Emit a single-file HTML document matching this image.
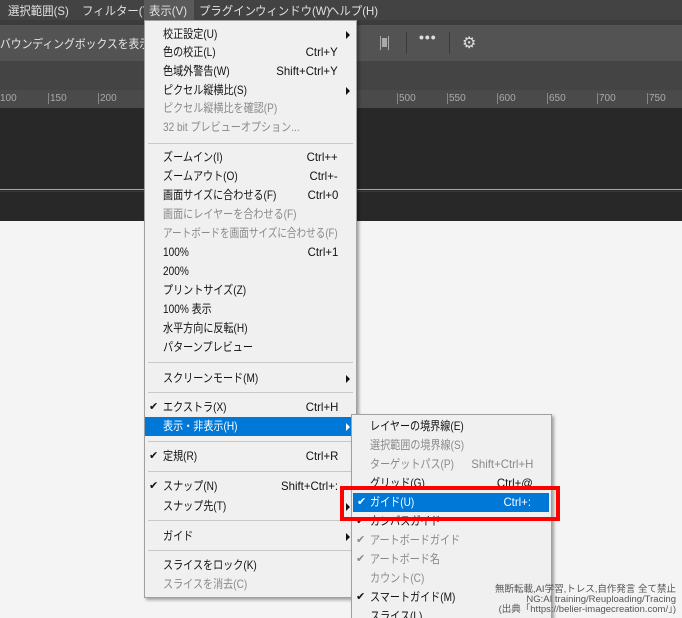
<!DOCTYPE html><html><head><meta charset="utf-8"><style>
*{margin:0;padding:0;box-sizing:border-box}
html{width:682px;height:618px;overflow:hidden}
body{width:682px;height:618px;overflow:hidden;position:relative;background:#f4f4f4;font-family:"Liberation Sans","Noto Sans CJK JP",sans-serif;font-size:12px}
.abs{position:absolute}
.mb{left:0;top:0;width:682px;height:20px;background:#434343;color:#e0e0e0}
.mb span{position:absolute;top:2px;white-space:nowrap;transform:scaleX(.95);transform-origin:left}
.menu{background:#f0f0f0;border:1px solid #a0a0a0;box-shadow:2px 2px 3px rgba(0,0,0,.35)}
.it{position:absolute;left:0;right:0;height:19px;line-height:19px;color:#111;white-space:nowrap}
.it .l{position:absolute;left:18px;transform:scaleX(.84);transform-origin:left}
.it .r{position:absolute;right:18px;transform:scaleX(.95);transform-origin:right}
.it .c{position:absolute;left:4px;font-size:11px}
.it .a{position:absolute;right:6px;top:6px;width:0;height:0;border-left:4px solid #111;border-top:4px solid transparent;border-bottom:4px solid transparent}
.d{color:#8a8a8a}.d .a{border-left-color:#8a8a8a}
.hl{background:#0078d7;color:#fff}.hl .a{border-left-color:#fff}
.sep{position:absolute;left:3px;right:3px;height:1px;background:#c8c8c8}
.wm{color:#555;font-size:9.5px;text-align:right;line-height:10px;right:6px;white-space:nowrap}
</style></head><body>
<div class="abs mb">
<span style="left:8px">選択範囲(S)</span><span style="left:82px">フィルター(T)</span>
<div class="abs" style="left:144px;top:0;width:50px;height:20px;background:#5a5a5a"></div>
<span style="left:149px">表示(V)</span><span style="left:199px">プラグイン</span><span style="left:255px">ウィンドウ(W)</span><span style="left:328px">ヘルプ(H)</span>
</div>
<div class="abs" style="left:0;top:20px;width:682px;height:5px;background:#3c3c3c"></div>
<div class="abs" style="left:0;top:25px;width:682px;height:36px;background:#535353;color:#e6e6e6"><span class="abs" style="left:0;top:10px;white-space:nowrap;transform:scaleX(.9);transform-origin:left">バウンディングボックスを表示</span>
<div class="abs" style="left:380px;top:11px;width:9px;height:14px;border-left:1px solid #aaa;border-right:1px solid #aaa"><div style="margin:2px 1px;width:5px;height:9px;background:#aaa"></div></div>
<div class="abs" style="left:406px;top:7px;width:1px;height:22px;background:#3a3a3a"></div>
<div class="abs" style="left:419px;top:4px;color:#ddd;font-size:14px;font-weight:bold;letter-spacing:1px">•••</div>
<div class="abs" style="left:449px;top:7px;width:1px;height:22px;background:#3a3a3a"></div>
<div class="abs" style="left:462px;top:8px;color:#ddd;font-size:16px">⚙</div>
</div>
<div class="abs" style="left:0;top:61px;width:682px;height:29px;background:#444"></div>
<div class="abs" style="left:0;top:90px;width:682px;height:18px;background:#4a4a4a;color:#aaa;font-size:10px">
<span class="abs" style="left:0;top:3px">100</span><span class="abs" style="left:48px;top:3px;border-left:1px solid #888;padding-left:1px">150</span><span class="abs" style="left:98px;top:3px;border-left:1px solid #888;padding-left:1px">200</span>
<span class="abs" style="left:397px;top:3px;border-left:1px solid #888;padding-left:1px">500</span><span class="abs" style="left:447px;top:3px;border-left:1px solid #888;padding-left:1px">550</span><span class="abs" style="left:497px;top:3px;border-left:1px solid #888;padding-left:1px">600</span><span class="abs" style="left:547px;top:3px;border-left:1px solid #888;padding-left:1px">650</span><span class="abs" style="left:597px;top:3px;border-left:1px solid #888;padding-left:1px">700</span><span class="abs" style="left:647px;top:3px;border-left:1px solid #888;padding-left:1px">750</span>
</div>
<div class="abs" style="left:0;top:108px;width:682px;height:113px;background:#282828"></div>
<div class="abs" style="left:0;top:189px;width:682px;height:1px;background:#4cd0d8"></div>
<div class="abs" style="left:0;top:191px;width:682px;height:1px;background:#3a3a3a"></div>

<div class="abs menu" style="left:144px;top:20px;width:213px;height:578px">
<div class="it" style="top:4px"><span class="l">校正設定(U)</span><i class="a"></i></div>
<div class="it" style="top:22px"><span class="l">色の校正(L)</span><span class="r">Ctrl+Y</span></div>
<div class="it" style="top:41px"><span class="l">色域外警告(W)</span><span class="r">Shift+Ctrl+Y</span></div>
<div class="it" style="top:60px"><span class="l">ピクセル縦横比(S)</span><i class="a"></i></div>
<div class="it d" style="top:78px"><span class="l">ピクセル縦横比を確認(P)</span></div>
<div class="it d" style="top:97px"><span class="l">32 bit プレビューオプション...</span></div>
<div class="sep" style="top:122px"></div>
<div class="it" style="top:127px"><span class="l">ズームイン(I)</span><span class="r">Ctrl++</span></div>
<div class="it" style="top:146px"><span class="l">ズームアウト(O)</span><span class="r">Ctrl+-</span></div>
<div class="it" style="top:165px"><span class="l">画面サイズに合わせる(F)</span><span class="r">Ctrl+0</span></div>
<div class="it d" style="top:184px"><span class="l">画面にレイヤーを合わせる(F)</span></div>
<div class="it d" style="top:203px"><span class="l" style="transform:scaleX(.8)">アートボードを画面サイズに合わせる(F)</span></div>
<div class="it" style="top:222px"><span class="l">100%</span><span class="r">Ctrl+1</span></div>
<div class="it" style="top:241px"><span class="l">200%</span></div>
<div class="it" style="top:260px"><span class="l">プリントサイズ(Z)</span></div>
<div class="it" style="top:279px"><span class="l">100% 表示</span></div>
<div class="it" style="top:298px"><span class="l">水平方向に反転(H)</span></div>
<div class="it" style="top:317px"><span class="l">パターンプレビュー</span></div>
<div class="sep" style="top:341px"></div>
<div class="it" style="top:348px"><span class="l">スクリーンモード(M)</span><i class="a"></i></div>
<div class="sep" style="top:371px"></div>
<div class="it" style="top:377px"><span class="c">✔</span><span class="l">エクストラ(X)</span><span class="r">Ctrl+H</span></div>
<div class="it hl" style="top:396px;right:-2px"><span class="l">表示・非表示(H)</span><i class="a" style="right:8px"></i></div>
<div class="sep" style="top:420px"></div>
<div class="it" style="top:426px"><span class="c">✔</span><span class="l">定規(R)</span><span class="r">Ctrl+R</span></div>
<div class="sep" style="top:450px"></div>
<div class="it" style="top:456px"><span class="c">✔</span><span class="l">スナップ(N)</span><span class="r">Shift+Ctrl+:</span></div>
<div class="it" style="top:476px"><span class="l">スナップ先(T)</span><i class="a"></i></div>
<div class="sep" style="top:499px"></div>
<div class="it" style="top:506px"><span class="l">ガイド</span><i class="a"></i></div>
<div class="sep" style="top:529px"></div>
<div class="it" style="top:535px"><span class="l">スライスをロック(K)</span></div>
<div class="it d" style="top:554px"><span class="l">スライスを消去(C)</span></div>
</div>

<div class="abs menu" style="left:351px;top:414px;width:201px;height:220px">
<div class="it" style="top:2px"><span class="l">レイヤーの境界線(E)</span></div>
<div class="it d" style="top:21px"><span class="l">選択範囲の境界線(S)</span></div>
<div class="it d" style="top:40px"><span class="l">ターゲットパス(P)</span><span class="r">Shift+Ctrl+H</span></div>
<div class="it" style="top:59px"><span class="l">グリッド(G)</span><span class="r">Ctrl+@</span></div>
<div class="it hl" style="top:78px;left:1px;right:2px"><span class="c">✔</span><span class="l" style="left:17px">ガイド(U)</span><span class="r">Ctrl+:</span></div>
<div class="it" style="top:97px"><span class="c">✔</span><span class="l">カンバスガイド</span></div>
<div class="it d" style="top:116px"><span class="c">✔</span><span class="l">アートボードガイド</span></div>
<div class="it d" style="top:135px"><span class="c">✔</span><span class="l">アートボード名</span></div>
<div class="it d" style="top:154px"><span class="l">カウント(C)</span></div>
<div class="it" style="top:173px"><span class="c">✔</span><span class="l">スマートガイド(M)</span></div>
<div class="it" style="top:192px"><span class="l">スライス(L)</span></div>
</div>
<div class="abs" style="left:340px;top:486px;width:220px;height:35px;border:4px solid #f00"></div>
<div class="abs wm" style="top:585px">無断転載,AI学習,トレス,自作発言 全て禁止<br>NG:AI training/Reuploading/Tracing<br>(出典「https://belier-imagecreation.com/」)</div>
</body></html>
